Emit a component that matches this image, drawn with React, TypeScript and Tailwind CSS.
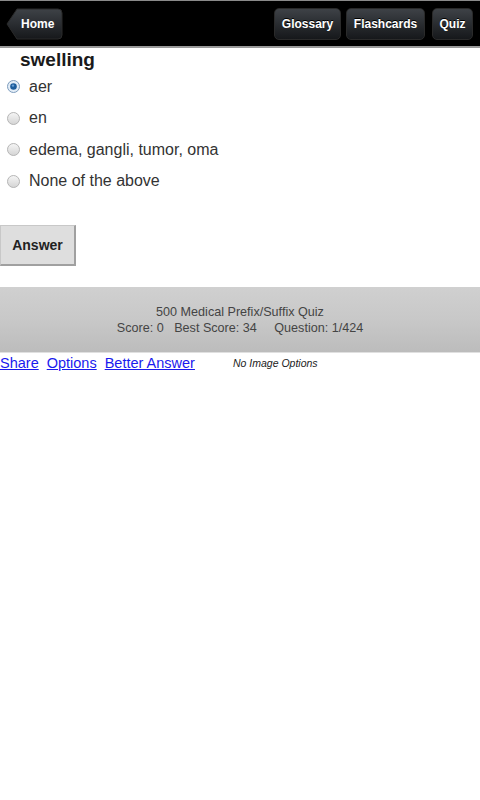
import React from "react";

const F = { fontFamily: '"Liberation Sans", Arial, sans-serif' };

function NavBtn({ label, w }: { label: string; w: string }) {
  return (
    <div
      className={`${w} h-[32px] rounded-[5px] border border-[#2a2a2a] bg-gradient-to-b from-[#3e4247] to-[#16181b] flex items-center justify-center text-white text-[12px] font-bold`}
      style={{ textShadow: "0 -1px 0 #000" }}
    >
      {label}
    </div>
  );
}

function Radio({ checked }: { checked?: boolean }) {
  if (checked) {
    return (
      <svg width="13" height="13" viewBox="0 0 13 13" className="shrink-0">
        <circle cx="6.5" cy="6.5" r="6" fill="#e3edf7" stroke="#7d9cbc" />
        <circle cx="6.5" cy="6.5" r="3.3" fill="#1d5d9c" />
        <circle cx="6" cy="5.6" r="1.2" fill="#6aa0d6" />
      </svg>
    );
  }
  return (
    <svg width="13" height="13" viewBox="0 0 13 13" className="shrink-0">
      <defs>
        <linearGradient id="rg" x1="0" y1="0" x2="0" y2="1">
          <stop offset="0" stopColor="#f6f6f6" />
          <stop offset="1" stopColor="#d4d4d4" />
        </linearGradient>
      </defs>
      <circle cx="6.5" cy="6.5" r="6" fill="url(#rg)" stroke="#b5b5b5" />
    </svg>
  );
}

export default function App() {
  const opts = ["aer", "en", "edema, gangli, tumor, oma", "None of the above"];
  return (
    <div className="w-[480px] h-[800px] bg-white" style={F}>
      <div className="h-[48px] bg-black border-t border-[#8a8a8a] border-b-2 border-b-[#9a9a9a] flex items-center pl-[6px] pr-[7px]">
        <div className="relative h-[32px] w-[57px] flex items-center">
          <svg width="57" height="32" className="absolute left-0 top-0">
            <defs>
              <linearGradient id="hg" x1="0" y1="0" x2="0" y2="1">
                <stop offset="0" stopColor="#3e4247" />
                <stop offset="1" stopColor="#16181b" />
              </linearGradient>
            </defs>
            <path d="M1 16 L11 1 H52 Q56 1 56 5 V27 Q56 31 52 31 H11 Z" fill="url(#hg)" stroke="#2a2a2a" />
          </svg>
          <span className="relative pl-[15px] text-white text-[12px] font-bold">Home</span>
        </div>
        <div className="flex-1" />
        <div className="flex">
          <NavBtn label="Glossary" w="w-[67px]" />
          <div className="w-[5px]" />
          <NavBtn label="Flashcards" w="w-[79px]" />
          <div className="w-[7px]" />
          <NavBtn label="Quiz" w="w-[41px]" />
        </div>
      </div>
      <div className="pl-[20px] pt-[1px] text-[19px] font-bold text-[#1a1a1a] leading-[22px]">swelling</div>
      <div className="flex flex-col">
        {opts.map((o, i) => (
          <div key={o} className="flex items-center h-[31.5px] pl-[7px] gap-[9px] text-[16px] text-[#333]">
            <Radio checked={i === 0} />
            <span>{o}</span>
          </div>
        ))}
      </div>
      <div className="pt-[28px]">
        <div className="w-[76px] h-[41px] bg-[#dedede] border border-[#c8c8c8] border-r-[#a0a0a0] border-b-[#a0a0a0] border-r-2 border-b-2 flex items-center justify-center text-[14px] font-bold text-[#222]">
          Answer
        </div>
      </div>
      <div className="mt-[21px] h-[66px] bg-gradient-to-b from-[#d0d0d0] via-[#c8c8c8] to-[#bcbcbc] flex flex-col items-center justify-center text-[12.6px] text-[#444] leading-[16px] border-b border-[#e0e0e0]">
        <div>500 Medical Prefix/Suffix Quiz</div>
        <div className="whitespace-pre">Score: 0   Best Score: 34     Question: 1/424</div>
      </div>
      <div className="flex items-center h-[22px] text-[14.5px] text-[#1a1aee]">
        <span className="underline">Share</span>
        <span className="underline ml-[8px]">Options</span>
        <span className="underline ml-[8px]">Better Answer</span>
        <span className="ml-[38px] text-[10.5px] italic text-[#222] no-underline">No Image Options</span>
      </div>
    </div>
  );
}
